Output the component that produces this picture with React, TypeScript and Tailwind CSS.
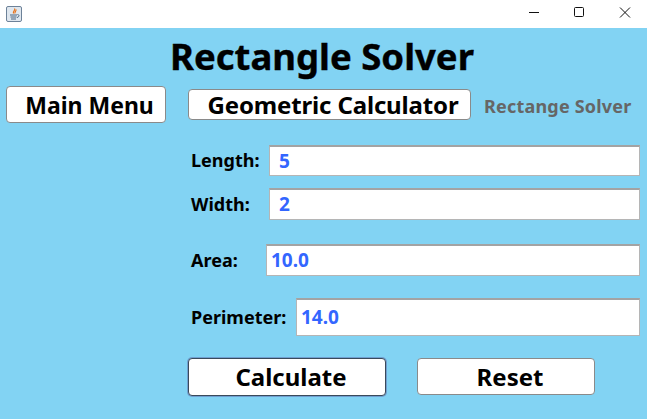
const font = "font-['Noto_Sans','Liberation_Sans',sans-serif]";

function JavaIcon() {
  return (
    <svg width="16" height="16" viewBox="0 0 16 16">
      <rect x="0.5" y="0.5" width="15" height="15" rx="1.5" fill="#dfe7ef" stroke="#6d8299" />
      <path d="M8.5 2.5C10 4 6.5 5 7.5 7.5M10 3.5C10.5 5 8.5 5.5 9 7.5" fill="none" stroke="#e8731a" strokeWidth="1.2" />
      <path d="M4 9h7M4.5 11h6M5 13h5" stroke="#4a6580" strokeWidth="1" />
      <path d="M11.5 8.5c2 0 2 2.5-.5 3" fill="none" stroke="#4a6580" strokeWidth="1" />
    </svg>
  );
}

function TitleBar() {
  return (
    <div className="flex h-[28px] items-center justify-between bg-white pl-[6px]">
      <JavaIcon />
      <div className="flex h-full items-center">
        <svg width="46" height="28" viewBox="0 0 46 28">
          <path d="M20 12.5h10" stroke="#111" strokeWidth="1" />
        </svg>
        <svg width="46" height="28" viewBox="0 0 46 28">
          <rect x="19.5" y="7.5" width="9" height="9" rx="1" fill="none" stroke="#111" strokeWidth="1" />
        </svg>
        <svg width="46" height="28" viewBox="0 0 46 28">
          <path d="M19 7.5l10 10M29 7.5l-10 10" stroke="#111" strokeWidth="1" />
        </svg>
      </div>
    </div>
  );
}

function Field({ label, value, labelWidth, pad, className }: { label: string; value: string; labelWidth: string; pad: string; className: string }) {
  return (
    <div className={`ml-[191px] mr-[7px] flex items-center ${className}`}>
      <span className={`${labelWidth} shrink-0 text-[18px] font-bold text-black`}>{label}</span>
      <div className={`flex h-full flex-1 items-center border border-[#b5b5b5] border-t-2 border-t-[#a3a3a3] bg-white ${pad} text-[19px] font-bold text-[#3366ff]`}>
        {value}
      </div>
    </div>
  );
}

export default function App() {
  return (
    <div className={`h-[419px] w-[647px] overflow-hidden bg-[#82d3f3] ${font}`}>
      <TitleBar />
      <h1 className="mt-[6px] h-[44px] pr-[3px] text-center text-[36.5px] leading-[44px] font-bold text-black [-webkit-text-stroke:0.4px_black]">Rectangle Solver</h1>
      <div className="mt-[8px] flex h-[37px] items-center pl-[6px]">
        <button className="h-[37px] w-[160px] rounded-[4px] border border-[#8a8a8a] bg-white pt-[2px] pl-[7px] text-[23px] leading-none font-bold text-black">
          Main Menu
        </button>
        <button className="ml-[22px] h-[31px] w-[283px] rounded-[4px] border border-[#8a8a8a] bg-white pl-[7px] text-[24px] leading-none font-bold tracking-[-0.15px] text-black">
          Geometric Calculator
        </button>
        <span className="ml-[13px] pt-[3px] text-[18px] font-bold tracking-[0.2px] text-[#666666]">Rectange Solver</span>
      </div>
      <Field label="Length:" value="5" labelWidth="w-[78px]" pad="pl-[9px]" className="mt-[22px] h-[31px]" />
      <Field label="Width:" value="2" labelWidth="w-[78px]" pad="pl-[9px]" className="mt-[12px] h-[32px]" />
      <Field label="Area:" value="10.0" labelWidth="w-[75px]" pad="pl-[4px]" className="mt-[24px] h-[32px]" />
      <Field label="Perimeter:" value="14.0" labelWidth="w-[105px]" pad="pl-[4px]" className="mt-[22px] h-[38px]" />
      <div className="mt-[22px] flex pl-[188px]">
        <button className="h-[38px] w-[198px] rounded-[4px] border border-[#3a4a5a] bg-white pl-[8px] text-[24px] leading-none font-bold text-black shadow-[0_0_0_1px_#6f9fd0]">
          Calculate
        </button>
        <button className="ml-[31px] h-[37px] w-[178px] rounded-[4px] border border-[#8a8a8a] bg-white pl-[8px] text-[24px] leading-none font-bold text-black">
          Reset
        </button>
      </div>
    </div>
  );
}
